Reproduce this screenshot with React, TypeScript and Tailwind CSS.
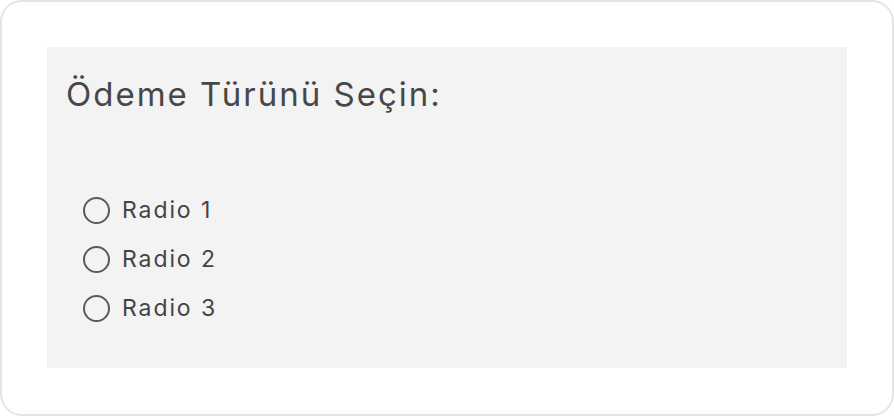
const options = ["Radio 1", "Radio 2", "Radio 3"];

export default function App() {
  return (
    <div className="w-[894px] h-[416px] bg-white">
      <div
        className="w-full h-full rounded-[22px] border-2 border-[#e3e5e8] p-[45px] pb-[46px]"
        style={{ fontFamily: "Inter, 'Noto Sans', sans-serif" }}
      >
        <div className="h-full bg-[#f3f3f3] pl-[19px] pt-[27px]">
          <h2 className="text-[33px] leading-[40px] text-[#474747] tracking-[2px]">
            Ödeme Türünü Seçin:
          </h2>
          <div className="mt-[82px] pl-[17px] flex flex-col gap-[21px]">
            {options.map((o) => (
              <label key={o} className="flex items-center gap-[12px] h-[28px]">
                <span className="w-[27px] h-[27px] rounded-full border-2 border-[#5a5a5a]" />
                <span className="text-[23px] text-[#444] tracking-[1.9px]">{o}</span>
              </label>
            ))}
          </div>
        </div>
      </div>
    </div>
  );
}
